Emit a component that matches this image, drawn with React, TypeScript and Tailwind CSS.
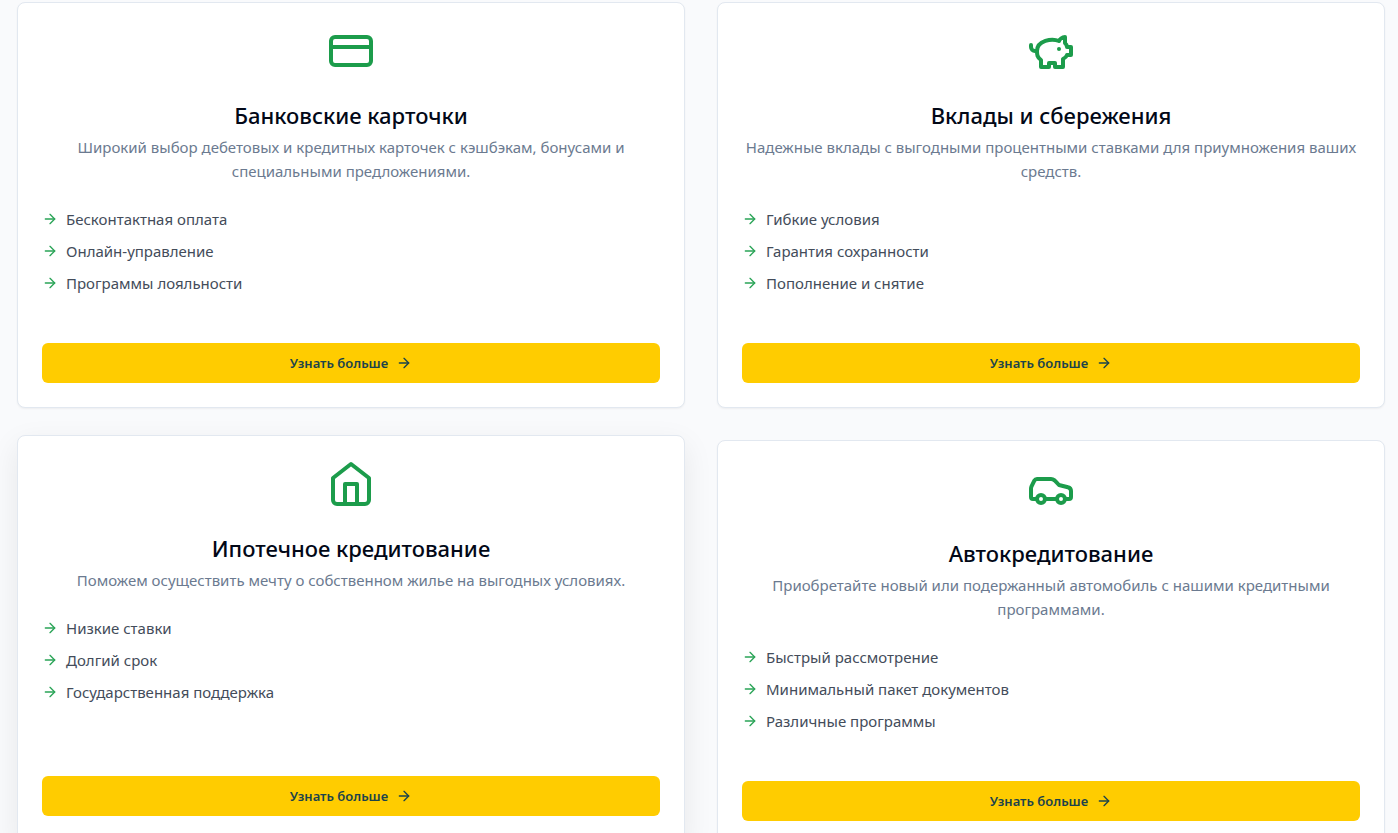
import type { ReactNode } from "react";
import { ArrowRight, Car, CreditCard } from "lucide-react";
import clsx from "clsx";

interface Service {
  title: string;
  description: string;
  features: string[];
  icon: ReactNode;
  raised?: boolean;
}

const PiggyIcon = () => (
  <svg
    className="size-12"
    viewBox="0 0 24 24"
    fill="none"
    stroke="currentColor"
    strokeWidth={2}
    strokeLinecap="round"
    strokeLinejoin="round"
  >
    <path d="M19 5c-1.5 0-2.8 1.4-3 2-3.5-1.5-11-.3-11 5 0 1.8 0 3 2 4.5V20h4v-2h3v2h4v-4c1-.5 1.7-1 2-2h2v-4h-2c0-1-.5-1.5-1-2V5z" />
    <path d="M2 9v1c0 1.1.9 2 2 2h1" />
    <path d="M16 11h.01" />
  </svg>
);

const HomeIcon = () => (
  <svg
    className="size-12"
    viewBox="0 0 24 24"
    fill="none"
    stroke="currentColor"
    strokeWidth={2}
    strokeLinecap="round"
    strokeLinejoin="round"
  >
    <path d="m3 9 9-7 9 7v11a2 2 0 0 1-2 2H5a2 2 0 0 1-2-2z" />
    <polyline points="9 22 9 12 15 12 15 22" />
  </svg>
);

const services: Service[] = [
  {
    title: "Банковские карточки",
    description:
      "Широкий выбор дебетовых и кредитных карточек с кэшбэкам, бонусами и специальными предложениями.",
    features: [
      "Бесконтактная оплата",
      "Онлайн-управление",
      "Программы лояльности",
    ],
    icon: <CreditCard className="size-12" />,
  },
  {
    title: "Вклады и сбережения",
    description:
      "Надежные вклады с выгодными процентными ставками для приумножения ваших средств.",
    features: ["Гибкие условия", "Гарантия сохранности", "Пополнение и снятие"],
    icon: <PiggyIcon />,
  },
  {
    title: "Ипотечное кредитование",
    description:
      "Поможем осуществить мечту о собственном жилье на выгодных условиях.",
    features: ["Низкие ставки", "Долгий срок", "Государственная поддержка"],
    icon: <HomeIcon />,
    raised: true,
  },
  {
    title: "Автокредитование",
    description:
      "Приобретайте новый или подержанный автомобиль с нашими кредитными программами.",
    features: [
      "Быстрый рассмотрение",
      "Минимальный пакет документов",
      "Различные программы",
    ],
    icon: <Car className="size-12" />,
  },
];

const ServiceCard = ({
  title,
  description,
  features,
  icon,
  raised,
}: Service) => (
  <article
    className={clsx(
      "flex flex-col rounded-lg border border-slate-200 bg-white p-6",
      raised
        ? "-translate-y-[5px] shadow-[0_10px_30px_rgba(0,0,0,0.08)]"
        : "shadow-xs",
    )}
  >
    <div className="flex flex-col items-center text-center">
      <div className="mb-6 text-[#1c9c4b]">{icon}</div>
      <h3 className="mb-1 text-[22px] leading-8 font-medium text-[#020817]">
        {title}
      </h3>
      <p className="text-[15px] leading-6 text-[#6b7a90]">{description}</p>
    </div>

    <ul className="mt-6 space-y-2">
      {features.map((feature) => (
        <li
          key={feature}
          className="flex items-center gap-2 text-[15px] leading-6 text-[#434c5a]"
        >
          <ArrowRight className="size-4 shrink-0 text-[#2aa457]" />
          {feature}
        </li>
      ))}
    </ul>

    <div className="mt-auto pt-12">
      <button
        type="button"
        className="flex h-10 w-full items-center justify-center gap-2 rounded-md bg-[#ffcc00] px-4 text-[13px] leading-5 font-semibold text-[#1b434b]"
      >
        Узнать больше
        <ArrowRight className="size-4" />
      </button>
    </div>
  </article>
);

const App = () => {
  return (
    <main className="h-screen overflow-hidden bg-[#f9fafc] pt-0.5 pr-[13px] pl-[17px] font-['Noto_Sans',sans-serif]">
      <section className="grid grid-cols-2 gap-8">
        {services.map((service) => (
          <ServiceCard key={service.title} {...service} />
        ))}
      </section>
    </main>
  );
};

export default App;
